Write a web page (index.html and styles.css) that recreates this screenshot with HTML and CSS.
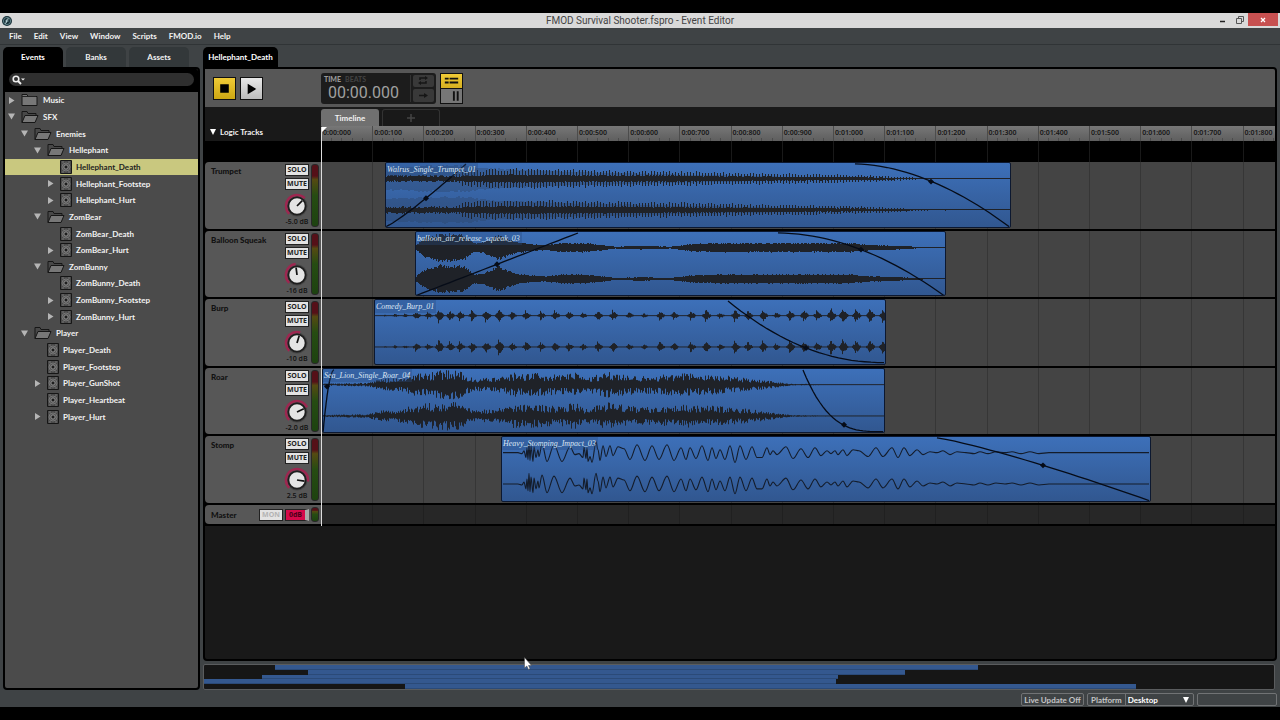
FILE: index.html
```html
<!DOCTYPE html>
<html lang="en">
<head>
<meta charset="utf-8">
<title>FMOD Survival Shooter.fspro - Event Editor</title>
<link rel="stylesheet" href="styles.css">
</head>
<body>
<div class="app">
  <header class="titlebar">
    <svg class="app-icon" viewBox="0 0 10 10"><circle cx="5" cy="5" r="5" fill="#183038"/><circle cx="5" cy="5" r="3.6" fill="none" stroke="#6f949c" stroke-width=".8"/><path d="M6.8 2.8Q4.6 2.4 4.6 5T3 7.4M3.4 5h3" stroke="#b6d2d6" fill="none"/></svg>
    <h1 class="title">FMOD Survival Shooter.fspro - Event Editor</h1>
    <div class="window-buttons">
      <button class="win" aria-label="Minimize"><svg viewBox="0 0 8 8"><path d="M1 5.500h5" stroke="#222" stroke-width="1.500"/></svg></button>
      <button class="win" aria-label="Restore"><svg viewBox="0 0 8 8"><path d="M.5 2.500h5v5h-5zM2.500 2.500v-2h5v5h-2" fill="none" stroke="#555"/></svg></button>
      <button class="win close" aria-label="Close"><svg viewBox="0 0 8 8"><path d="M2 2l4 4M6 2l-4 4" stroke="#fff" stroke-width="1.300"/></svg></button>
    </div>
  </header>
  <nav class="menubar">
    <button>File</button><button>Edit</button><button>View</button><button>Window</button><button>Scripts</button><button>FMOD.io</button><button>Help</button>
  </nav>
  <main class="workspace">
    <section class="browser">
      <div class="tabs"><button class="tab active">Events</button><button class="tab">Banks</button><button class="tab">Assets</button></div>
      <div class="panel">
        <label class="search">
          <svg viewBox="0 0 14 10"><circle cx="4" cy="4" r="2.800" fill="none" stroke="#eee" stroke-width="1.600"/><path d="M6 6l3 3" stroke="#eee" stroke-width="2"/><path d="M9 3.500h4l-2 2z" fill="#eee"/></svg>
          <input type="search" aria-label="Search events">
        </label>
        <ul class="tree" id="tree"></ul>
      </div>
    </section>
    <section class="editor">
      <div class="tabs"><button class="tab doc active">Hellephant_Death</button></div>
      <div class="panel">
        <div class="toolbar">
          <button class="square stop" aria-label="Stop"><svg viewBox="0 0 22 22"><path d="M6.500 6.500h9v9h-9z"/></svg></button>
          <button class="square" aria-label="Play"><svg viewBox="0 0 22 22"><path d="M7 6l9 5.500l-9 5.500z"/></svg></button>
          <div class="clock">
            <div class="readout">
              <div class="modes"><b>TIME</b><span>BEATS</span></div>
              <output class="time">00:00.000</output>
            </div>
            <div class="clock-buttons">
              <button aria-label="Loop"><svg viewBox="0 0 20 11"><path d="M7 5v-2h6M13 6v2h-6" fill="none" stroke="#161616" stroke-width="1.500"/><path d="M12 1l3 2l-3 2zM8 6l-3 2l3 2z" fill="#161616"/></svg></button>
              <button aria-label="Follow"><svg viewBox="0 0 20 11"><path d="M6 5.500h6" stroke="#161616" stroke-width="1.500"/><path d="M11 3l4 2.500l-4 2.500z" fill="#161616"/></svg></button>
            </div>
          </div>
          <div class="views">
            <button class="on" aria-label="Track view"><svg viewBox="0 0 22 14"><path d="M4 4.500h4M9 4.500h9M4 8.500h4M9 8.500h9" stroke="#111" stroke-width="2"/></svg></button>
            <button aria-label="Mixer view"><svg viewBox="0 0 22 14"><path d="M13.500 2v10M17.500 2v10" stroke="#111" stroke-width="2"/></svg></button>
          </div>
        </div>
        <div class="timeline">
          <div class="sheets"><button class="sheet active">Timeline</button><button class="sheet add" aria-label="Add sheet"><svg viewBox="0 0 10 10"><path d="M5 1v8M1 5h8" stroke="#444" stroke-width="1.500"/></svg></button></div>
          <div class="ruler-row">
            <button class="logic"><svg viewBox="0 0 6 6"><path d="M0 0h6l-3 6z" fill="#fff"/></svg>Logic Tracks</button>
            <div class="ruler" id="ruler"></div>
          </div>
          <div class="logic-lane"><div class="lane"></div></div>
          <div class="tracks" id="tracks"></div>
          <div class="track master">
            <div class="head"><span class="name">Master</span><button class="small mon">MON</button><button class="small gain">0dB</button><span class="meter"></span></div>
            <div class="lane"></div>
          </div>
          <div class="playhead"><svg viewBox="0 0 6 6"><path d="M0 0h6l-6 6z" fill="#fff"/></svg></div>
        </div>
      </div>
      <div class="overview" id="overview"></div>
    </section>
  </main>
  <footer class="status">
    <button class="box live">Live Update Off</button>
    <div class="box platform"><label for="platform">Platform</label>
      <select id="platform"><option>Desktop</option></select>
      <svg viewBox="0 0 6 6"><path d="M0 0h6l-3 6z" fill="#fff"/></svg></div>
    <div class="box empty"></div>
  </footer>
  <svg class="cursor" viewBox="0 0 8 13"><path d="M.5.500v10.500l2.300-2l1.700 3.500l1.500-.700l-1.500-3.300h3z" fill="#fff" stroke="#444" stroke-width=".5"/></svg>
</div>
<script src="app.js"></script>
</body>
</html>
```
FILE: styles.css
```css
* { box-sizing: border-box; }
body {
  margin: 0;
  background: #000;
  color: #f2f2f2;
  font: 700 8px/12px Lato, "Open Sans", sans-serif;
}
button, input, select {
  margin: 0;
  padding: 0;
  border: 0;
  background: none;
  color: inherit;
  font: inherit;
}
svg { display: block; }
.app {
  position: relative;
  display: flex;
  flex-direction: column;
  min-height: 100vh;
  padding: 13px 0;
}
.titlebar {
  display: grid;
  grid-template-columns: 1fr auto 1fr;
  align-items: center;
  height: 15px;
  padding: 0 2px;
  background: #d9d9d9;
}
.app-icon { width: 10px; height: 10px; }
.title { margin: 0; color: #444; font: 400 10px/14px Roboto, "Open Sans", sans-serif; }
.window-buttons { display: flex; justify-content: flex-end; align-self: start; }
.win { display: grid; place-items: center; width: 17px; height: 13px; }
.win svg { width: 8px; height: 8px; }
.win.close { width: 30px; background: #c75050; }
.menubar {
  display: flex;
  gap: 12px;
  height: 17px;
  padding: 0 9px;
  border-bottom: 1px solid #303436;
  background: #3f4345;
}
.workspace {
  flex: 1;
  display: grid;
  grid-template-columns: 197px 1fr;
  gap: 3px;
  padding: 2px 3px 0;
  background: #3f4345;
}
.browser, .editor { display: flex; flex-direction: column; min-width: 0; }
.tabs { display: flex; gap: 3px; height: 20px; }
.tab { width: 60px; border-radius: 5px 5px 0 0; background: #33383a; }
.tab.active { background: #000; color: #fff; }
.tab.doc { width: 75px; }
.panel {
  flex: 1;
  display: flex;
  flex-direction: column;
  border: 2px solid #000;
  border-radius: 0 4px 4px 4px;
  background: #191919;
  overflow: hidden;
}
.browser .panel { background: #4b4b4b; }
.search { display: flex; padding: 4px 4px 6px; background: #000; }
.search svg { position: absolute; width: 14px; height: 10px; margin: 2px 0 0 3px; }
.search input {
  flex: 1;
  min-width: 0;
  height: 13px;
  padding-left: 20px;
  border-radius: 7px;
  background: #2f2f2f;
}
.tree {
  display: grid;
  grid-template-rows: repeat(20, 1fr);
  height: 333px;
  margin: 0;
  padding: 0;
  list-style: none;
}
.tree li { display: flex; align-items: center; }
.tree li.selected { background: #c9c87f; color: #222; }
.arrow { width: 7px; height: 7px; margin: 0 6px 0 3px; }
.folder { width: 18px; height: 14px; margin-right: 4px; }
.event { width: 12px; height: 14px; margin-right: 4px; }

.toolbar { display: flex; align-items: center; height: 38px; padding-left: 8px; background: #575757; }
.square { width: 23px; height: 23px; margin-right: 4px; border: 1px solid #111; background: linear-gradient(#e8e8e8, #bcbcbc); }
.square svg { width: 21px; height: 21px; }
.square.stop { background: linear-gradient(#f0cb36, #cda713); }
.clock { display: flex; width: 115px; height: 31px; margin-left: 54px; padding: 2px; border-radius: 3px; background: #1c1c1c; }
.readout { flex: 1; border-right: 1px solid #333; }
.modes { display: flex; gap: 4px; padding-left: 1px; font-size: 7px; line-height: 8px; color: #444; }
.modes b { color: #999; }
.time { display: block; padding-left: 5px; color: #a0a0a0; font: 400 16px/20px Roboto, sans-serif; }
.clock-buttons { display: grid; gap: 2px; padding-left: 2px; }
.clock-buttons button { width: 21px; background: #393939; border-radius: 2px; }
.clock-buttons svg { width: 20px; height: 11px; }
.views { display: grid; width: 23px; height: 31px; margin-left: 4px; border: 1px solid #111; }
.views button { background: #777; }
.views button.on { background: linear-gradient(#f0cb36, #d6b020); border-bottom: 1px solid #111; }
.views svg { width: 21px; height: 14px; }

.timeline { position: relative; padding-bottom: 2px; background: #000; }
.sheets { display: flex; gap: 3px; height: 19px; padding: 2px 0 0 116px; background: #191919; }
.sheet { width: 58px; border-radius: 3px 3px 0 0; }
.sheet.active { background: #707070; }
.sheet.add { display: grid; place-items: center; border: 1px solid #333; border-bottom: 0; }
.sheet svg { width: 10px; height: 10px; }
.ruler-row, .track { display: grid; grid-template-columns: 116px 1fr; }
.ruler-row { height: 15px; background: #191919; }
.logic { display: flex; align-items: center; gap: 4px; padding: 0 0 3px 5px; }
.logic svg { width: 6px; height: 6px; }
.ruler {
  position: relative;
  overflow: hidden;
  background: linear-gradient(#777, #5e5e5e);
  color: #161616;
  font: 600 7px/14px "Noto Sans", sans-serif;
}
.ruler span { position: absolute; top: 0; bottom: 0; padding-left: 1px; border-left: 1px solid #4c4c4c; white-space: nowrap; }
.ruler i { position: absolute; bottom: 0; height: 3px; border-left: 1px solid #4c4c4c; }
.logic-lane { height: 21px; padding-left: 116px; }
.lane {
  position: relative;
  height: 100%;
  background: repeating-linear-gradient(90deg, #363636 0 1px, #444 1px 5.367%);
}
.logic-lane .lane { background: repeating-linear-gradient(90deg, #191919 0 1px, #000 1px 5.367%); }
.tracks { display: grid; grid-template-rows: repeat(5, 1fr); gap: 2px; height: 341px; }
.head {
  display: grid;
  grid-template-columns: 1fr 24px 8px;
  gap: 2px;
  padding: 2px 2px 2px 6px;
  border-radius: 4px 0 0 4px;
  background: #575757;
  color: #111;
}
.name { padding-top: 1px; font-weight: 900; }
.controls { display: flex; flex-direction: column; align-items: center; }
.small {
  width: 24px;
  height: 12px;
  margin-bottom: 2px;
  border: 1px solid #222;
  background: #e3e3e3;
  color: #222;
  font: 700 7px/10px "Open Sans", sans-serif;
}
.knob { width: 26px; height: 26px; }
.db { margin-top: -1px; font: 600 7px/9px "Open Sans", sans-serif; white-space: nowrap; }
.meter { border: 1px solid #282828; border-radius: 3px; background: linear-gradient(#551018 0 18%, #554a12 24%, #264c12 50%, #1d4210); }
.master { height: 19px; margin-top: 2px; }
.master .head { grid-template-columns: 1fr 24px 24px 8px; align-items: center; }
.master .small { margin: 0; }
.master .meter { height: 15px; }
.master .name { padding: 0; }
.master .lane { background: repeating-linear-gradient(90deg, #202020 0 1px, #272727 1px 5.367%); }
.master .mon { color: #b3b3b3; }
.master .gain { border-right: 4px solid #aaa; background: #d6094a; color: #4b0018; }

.clip {
  position: absolute;
  top: 0;
  bottom: 1px;
  overflow: hidden;
  border: 1px solid #0c1830;
  border-radius: 2px;
  background: linear-gradient(#3d70b9, #315790);
}
.clip svg { position: absolute; width: 100%; height: 100%; }
.clip .wave { shape-rendering: crispEdges; }
.clip .label {
  position: absolute;
  z-index: 1;
  padding: 0 2px 0 1px;
  background: rgba(40, 75, 125, .35);
  color: #dbe5f3;
  font: italic 400 8px/13px "Liberation Serif", serif;
  white-space: nowrap;
}
.playhead { position: absolute; top: 20px; bottom: 0; left: 116px; border-left: 1px solid #ddd; }
.playhead svg { width: 5px; height: 5px; }
.overview {
  display: grid;
  grid-template-rows: repeat(5, 1fr);
  height: 26px;
  margin-top: 3px;
  margin-right: 2px;
  border: 1px solid #5a5c5e;
  border-radius: 2px;
  background: #161616;
}
.overview i { border-bottom: 1px solid #2b4a78; background: #34588f; }
.status { display: flex; justify-content: flex-end; gap: 3px; height: 17px; padding: 3px 3px 1px 0; background: #3f4345; }
.box { display: flex; align-items: center; height: 13px; border: 1px solid #717375; border-radius: 2px; color: #c5c5c5; padding: 0 2px; }
.live { justify-content: center; width: 63px; }
.platform { width: 107px; padding-right: 4px; }
.platform label { padding: 0 3px 0 1px; border-right: 1px solid #717375; }
.platform select { flex: 1; min-width: 0; padding-left: 2px; appearance: none; color: #fff; }
.platform svg { width: 6px; height: 6px; }
.empty { width: 80px; }
.cursor { position: absolute; left: 524px; top: 657px; width: 8px; height: 13px; }
```
FILE: app.js
```js
const byId = id => document.getElementById(id);

// Tree: [depth, kind, name, arrow]
const items = [
  [0, 'closed', 'Music', 'right'], [0, 'open', 'SFX', 'down'], [1, 'open', 'Enemies', 'down'],
  [2, 'open', 'Hellephant', 'down'], [3, 'event', 'Hellephant_Death', ''],
  [3, 'event', 'Hellephant_Footstep', 'right'], [3, 'event', 'Hellephant_Hurt', 'right'],
  [2, 'open', 'ZomBear', 'down'], [3, 'event', 'ZomBear_Death', ''], [3, 'event', 'ZomBear_Hurt', 'right'],
  [2, 'open', 'ZomBunny', 'down'], [3, 'event', 'ZomBunny_Death', ''],
  [3, 'event', 'ZomBunny_Footstep', 'right'], [3, 'event', 'ZomBunny_Hurt', 'right'],
  [1, 'open', 'Player', 'down'], [2, 'event', 'Player_Death', ''], [2, 'event', 'Player_Footstep', ''],
  [2, 'event', 'Player_GunShot', 'right'], [2, 'event', 'Player_Heartbeat', ''], [2, 'event', 'Player_Hurt', 'right']
];
const icons = {
  closed: '<svg class="folder" viewBox="0 0 18 14"><path d="M1 12.500v-11h5l1 2h9v9z" fill="#777" stroke="#161616"/><path d="M1 3.500h14" stroke="#222"/></svg>',
  open: '<svg class="folder" viewBox="0 0 18 14"><path d="M1 12.500v-11h5l1 2h8v2" fill="#484848" stroke="#161616"/><path d="M1 12.500l3-7h13l-3 7z" fill="#777" stroke="#161616"/></svg>',
  event: '<svg class="event" viewBox="0 0 12 14"><path d="M.5.500h11v13h-11z" fill="#4a4a4a" stroke="#161616"/><circle cx="6" cy="7" r="4" fill="none" stroke="#8a8a8a" stroke-width=".7"/><circle cx="6" cy="7" r="2.300" fill="none" stroke="#a0a0a0" stroke-width=".7"/><circle cx="6" cy="7" r="1" fill="#111"/><path d="M2 2h2M8 2h2M2 12h2M8 12h2" stroke="#888" stroke-width=".7"/></svg>'
};
const arrows = { right: 'M1 0l5.500 3.500l-5.500 3.500z', down: 'M0 .500h7l-3.500 6z', '': '' };
byId('tree').innerHTML = items.map(([depth, kind, name, arrow]) =>
  `<li class="${name === 'Hellephant_Death' ? 'selected' : ''}" style="padding-left:${depth * 13}px">
    <svg class="arrow" viewBox="0 0 7 7"><path d="${arrows[arrow]}" fill="#b5b5b5"/></svg>
    ${icons[kind]}<span>${name}</span></li>`).join('');

// Timeline scale: pixels at the default window width, written as percentages.
const ORIGIN = 321, SPAN = 954, STEP = 5.367;
const percent = px => (px / SPAN * 100).toFixed(3) + '%';
let ruler = '';
for (let n = 0; n < 19; n++) {
  const text = `0:0${n >= 10 ? 1 : 0}:${n % 10}00`;
  ruler += `<span style="left:${n * STEP}%">${text}</span>`;
  for (let k = 1; k < 5; k++) ruler += `<i style="left:${(n + k / 5) * STEP}%"></i>`;
}
byId('ruler').innerHTML = ruler;

const burps = [384, 394, 404, 415, 427, 438, 449, 459, 471, 485, 498, 511, 525, 540, 554, 568, 582, 597, 612, 628, 643,
  659, 673, 690, 705, 719, 734, 747, 762, 775, 789, 803, 816, 830, 842, 855, 869, 882];
const burpSizes = [1, 2, 2, 5, 4, 8, 6, 6, 6, 7, 9, 5, 6, 5, 6, 5, 4, 6, 6, 4, 3, 6, 5, 6, 7, 4, 7, 6, 7, 4, 7, 7, 6, 9, 9, 8, 8, 8];
const stomp = [[503, 0], [518, 0], [522, -1], [524, 2], [526, -5], [527, 5], [528, -7], [529, 11], [530, -8], [531, 7], [533, -9],
  [534, 6], [536, -5], [538, 3], [539, -4], [542, 9], [547, -9], [554, 8], [562, -9], [570, 6], [575, -2], [579, -1], [583, -5],
  [584, 6], [586, -6], [587, 5], [588, -9], [590, -4], [592, -10], [596, 11], [598, 3], [600, -8], [603, 7], [606, -4], [610, 7], [613, -3], [618, 6],
  [624, 4], [630, -7], [637, 8], [645, -8], [652, 7], [659, -7], [667, 8], [674, -8], [681, 5], [686, -7], [690, 5], [696, -6],
  [702, 7], [708, -8], [712, 5], [716, -6], [720, 3], [725, -7], [730, 7], [735, -10], [740, 7], [746, -7], [752, 6], [757, -5],
  [762, -5], [767, 5], [770, -2], [773, 2], [777, -2], [786, 6], [793, -6], [801, 4], [808, -5], [815, 5], [821, -3], [827, 2],
  [831, -1], [835, 2], [838, -2], [843, 3], [847, -3], [853, 3], [859, 2], [868, -4], [876, 5], [883, -4], [892, 5], [898, -5],
  [904, 5], [910, -3], [917, 3], [923, -2], [930, 1], [937, 0], [943, 2], [950, -2], [957, 1], [966, 0], [974, -1], [980, 1],
  [988, -1], [996, 1], [1005, 0], [1012, 1], [1021, -1], [1030, 1], [1039, -1], [1049, 0], [1149, 0]];

const tracks = [
  { name: 'Trumpet', db: '-5.0 dB', angle: 45, clip: 'Walrus_Single_Trumpet_01', x: [385, 1011], fades: [[386, 65, 426, 36, 466, 1], [855, 1, 931, 19, 1009, 65]],
    env: [[386, 4], [400, 4], [455, 4], [465, 9], [520, 11], [600, 9], [680, 8], [760, 6], [860, 4], [900, 2], [930, .6], [1011, .5]], core: .42,
    wash: [[386, 12], [430, 14], [465, 14], [485, 11], [560, 8], [660, 5], [760, 3], [880, 0]] },
  { name: 'Balloon Squeak', db: '-16 dB', angle: -7, clip: 'balloon_air_release_squeak_03', x: [415, 946], fades: [[416, 65, 497, 33, 578, 1], [778, 1, 861, 18, 944, 65]],
    env: [[415, 2], [425, 11], [440, 15], [463, 14], [474, 5], [484, 6], [497, 14], [506, 10], [516, 6], [530, 4], [545, 3], [562, 5], [585, 5], [602, 3], [615, 1], [640, 2], [670, 1], [690, 4], [715, 5], [850, 5], [870, 3], [900, 2], [920, .6], [946, .5]], core: .75 },
  { name: 'Burp', db: '-10 dB', angle: 17, clip: 'Comedy_Burp_01', x: [374, 886], fades: [[728, 1, 806, 49, 884, 64]], bursts: true },
  { name: 'Roar', db: '-2.0 dB', angle: 65, clip: 'Sea_Lion_Single_Roar_04', x: [322, 885], fades: [[323, 65, 327, 18, 334, 1], [803, 1, 844, 57, 883, 64]],
    env: [[322, 1], [368, 2], [380, 6], [400, 7], [412, 11], [440, 15], [458, 15], [472, 7], [495, 7], [515, 13], [540, 12], [560, 10], [575, 14], [584, 7], [608, 14], [640, 9], [685, 12], [720, 10], [750, 7], [770, 4], [790, 1], [820, .6], [885, .4]], core: .3 },
  { name: 'Stomp', db: '2.5 dB', angle: 98, clip: 'Heavy_Stomping_Impact_03', x: [501, 1151], fades: [[937, 1, 1043, 29, 1149, 65]], line: true }
];

let seed = 7;
const random = () => (seed = (seed * 16807) % 2147483647) / 2147483647;
function at(points, x) {
  for (let i = 1; i < points.length; i++) {
    if (x <= points[i][0]) {
      const [x0, y0] = points[i - 1], [x1, y1] = points[i];
      return Math.max(0, y0 + (y1 - y0) * (x - x0) / (x1 - x0));
    }
  }
  return 0;
}
function burst(x) {
  let size = .5;
  burps.forEach((peak, i) => {
    const d = x - peak;
    if (d > -4 && d < 7) size = Math.max(size, burpSizes[i] * (d < 0 ? .6 + d / 7 : Math.pow(1 - d / 7, 1.2)));
  });
  return size;
}
function channel(t, left, right, mid) {
  if (t.line) {
    let d = '';
    stomp.forEach(([x, y], i) => {
      const px = x - left, py = mid - y;
      if (!i) { d = `M${px} ${py}`; return; }
      const [ax, ay] = stomp[i - 1];
      const third = (x - ax) / 3;
      d += `C${(ax - left + third).toFixed(1)} ${mid - ay} ${(px - third).toFixed(1)} ${py} ${px} ${py}`;
    });
    return `<path d="${d}" fill="none" stroke="#141c2a" stroke-width="1.100"/>`;
  }
  let d = '';
  for (let x = left + 1; x < right; x++) {
    const e = t.bursts ? burst(x) : at(t.env, x);
    const spread = t.bursts ? .5 : t.core;
    let up = e * (spread + (1 - spread) * random()), down = e * (spread + (1 - spread) * random());
    if (t.name === 'Trumpet' && x > 455) {
      const tall = x % 3 === 0 ? 1 : spread;
      up = e * tall * (.7 + .3 * random());
      down = e * tall * (.7 + .3 * random());
    }
    d += `M${x - left + .5} ${(mid - Math.max(.5, up)).toFixed(1)}V${(mid + Math.max(.5, down)).toFixed(1)}`;
  }
  let wash = '';
  if (t.wash) {
    let w = '';
    for (let x = left + 1; x < right; x += 2) {
      const e = at(t.wash, x) * (.85 + .15 * random());
      if (e > 1) w += `M${x - left + 1} ${(mid - e).toFixed(1)}V${(mid + e).toFixed(1)}`;
    }
    wash = `<path class="wave" d="${w}" stroke="#2c4163" stroke-opacity=".35" stroke-width="2"/>`;
  }
  return `${wash}<path class="wave" d="${d}" stroke="#1f2126" stroke-width="1"/>`;
}
// A fade is a power curve through its middle handle.
function fade([x0, y0, xm, ym, x1, y1], left) {
  const v = (ym - y0) / (y1 - y0);
  const p = Math.log(v > .5 ? 1 - v : v) / Math.log(.5);
  let d = `M${x0 - left} ${y0}`;
  for (let i = 1; i <= 24; i++) {
    const u = i / 24, k = v > .5 ? 1 - Math.pow(1 - u, p) : Math.pow(u, p);
    d += `L${(x0 - left + (x1 - x0) * u).toFixed(1)} ${(y0 + (y1 - y0) * k).toFixed(1)}`;
  }
  return `<path d="${d}" fill="none" stroke="#060c18" stroke-width="1.300"/>
    <path d="M${xm - left} ${ym - 3}l3 3l-3 3l-3-3z" fill="#060c18"/>`;
}
function knob(angle) {
  const r = angle * Math.PI / 180;
  const point = (a, radius) => `${(13 + radius * Math.sin(a)).toFixed(2)} ${(14 - radius * Math.cos(a)).toFixed(2)}`;
  const start = -135 * Math.PI / 180;
  return `<svg class="knob" viewBox="0 0 26 26"><circle cx="13" cy="14" r="10.500" fill="#444"/>
    <path d="M${point(start, 11)}A11 11 0 ${angle > 45 ? 1 : 0} 1 ${point(r, 11)}" fill="none" stroke="#9d2750" stroke-width="2.500"/>
    <circle cx="13" cy="14" r="8.600" fill="#e4e4e4" stroke="#1e1e1e" stroke-width="1.800"/>
    <path d="M13 14L${point(r, 7.5)}" stroke="#111" stroke-width="1.700"/></svg>`;
}
byId('tracks').innerHTML = tracks.map(t => {
  const [left, right] = t.x, width = right - left;
  return `<div class="track"><div class="head"><span class="name">${t.name}</span>
    <div class="controls"><button class="small">SOLO</button><button class="small">MUTE</button>${knob(t.angle)}<span class="db">${t.db}</span></div>
    <span class="meter"></span></div>
    <div class="lane"><div class="clip" style="left:${percent(left - ORIGIN)};width:${percent(width)}">
      <span class="label">${t.clip}</span>
      <svg viewBox="1 0 ${width - 2} 65" preserveAspectRatio="none">${channel(t, left, right, 16)}${channel(t, left, right, 48)}${t.fades.map(f => fade(f, left)).join('')}</svg>
    </div></div></div>`;
}).join('');

const bars = [[71, 774], [104, 701], [58, 634], [0, 632], [201, 932]];
byId('overview').innerHTML = bars.map(([a, b]) =>
  `<i style="margin-left:${(a / 1070 * 100).toFixed(2)}%;width:${((b - a) / 1070 * 100).toFixed(2)}%"></i>`).join('');
```
